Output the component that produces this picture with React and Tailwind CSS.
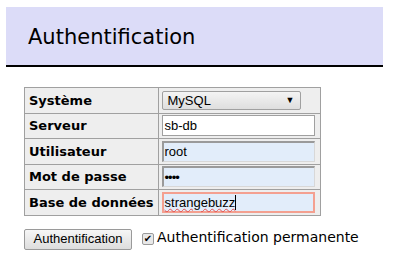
export default function App() {
  const label = "border border-[#a0a0a0] bg-[#eeeeee] px-[4px] h-[25.5px] text-left font-bold text-[13px] text-black whitespace-nowrap";
  const cell = "border border-[#a0a0a0] bg-[#eeeeee] px-[3px] h-[25.5px]";
  const arial = { fontFamily: '"Liberation Sans", sans-serif' };
  return (
    <div className="w-[393px] h-[262px] bg-white relative" style={{ fontFamily: '"DejaVu Sans", sans-serif' }}>
      <div className="pt-[7px] pl-[6px]">
        <div className="w-[377px] h-[60px] bg-[#dcdcf8] border-b-2 border-black flex items-center pl-[22px] pt-[4px]">
          <span className="text-[21px] text-black">Authentification</span>
        </div>
      </div>
      <div className="pl-[24px] pt-[20px]">
        <table className="border-collapse table-fixed">
          <tbody>
            <tr>
              <td className={label + " w-[133px]"}>Système</td>
              <td className={cell + " w-[162px]"}>
                <div className="w-[139px] h-[19px] border border-[#a0a0a0] rounded-[2px] bg-gradient-to-b from-[#f4f4f4] to-[#dedede] flex items-center justify-between px-[5px] text-[13px]" style={arial}>
                  <span>MySQL</span>
                  <span className="text-[9px]">▼</span>
                </div>
              </td>
            </tr>
            <tr>
              <td className={label}>Serveur</td>
              <td className={cell}>
                <div className="w-[153px] h-[21px] border border-[#a0a0a0] bg-white flex items-center px-[2px] text-[13px]" style={arial}>sb-db</div>
              </td>
            </tr>
            <tr>
              <td className={label}>Utilisateur</td>
              <td className={cell}>
                <div className="w-[153px] h-[21px] border-t-2 border-l-2 border-r border-b border-t-[#9a9a9a] border-l-[#9a9a9a] border-r-[#d8d8d8] border-b-[#d8d8d8] bg-[#e2edfa] flex items-center px-[1px] text-[13px]" style={arial}>root</div>
              </td>
            </tr>
            <tr>
              <td className={label}>Mot de passe</td>
              <td className={cell}>
                <div className="w-[153px] h-[21px] border-t-2 border-l-2 border-r border-b border-t-[#9a9a9a] border-l-[#9a9a9a] border-r-[#d8d8d8] border-b-[#d8d8d8] bg-[#e2edfa] flex items-center px-[1px] text-[13px] tracking-[-1px]" style={arial}>••••</div>
              </td>
            </tr>
            <tr>
              <td className={label}>Base de données</td>
              <td className={cell}>
                <div className="w-[153px] h-[21px] border-2 border-[#f4a090] bg-[#e2edfa] flex items-center px-[1px] text-[13px]" style={arial}>
                  <span className="underline decoration-wavy decoration-[#e05050] decoration-1">strangebuzz</span>
                  <span className="w-px h-[15px] bg-black"></span>
                </div>
              </td>
            </tr>
          </tbody>
        </table>
        <div className="flex items-center mt-[13px]">
          <div className="h-[21px] w-[108px] justify-center border border-[#9a9a9a] rounded-[2px] bg-gradient-to-b from-[#f6f6f6] to-[#dddddd] flex items-center text-[13px] text-black" style={arial}>Authentification</div>
          <div className="ml-[10px] w-[12px] h-[12px] border border-[#9a9a9a] rounded-[2px] bg-[#e8e8e8] flex items-center justify-center text-[10px] leading-none">✔</div>
          <span className="ml-[3px] text-[14px] text-black -mt-[3px]">Authentification permanente</span>
        </div>
      </div>
    </div>
  );
}
